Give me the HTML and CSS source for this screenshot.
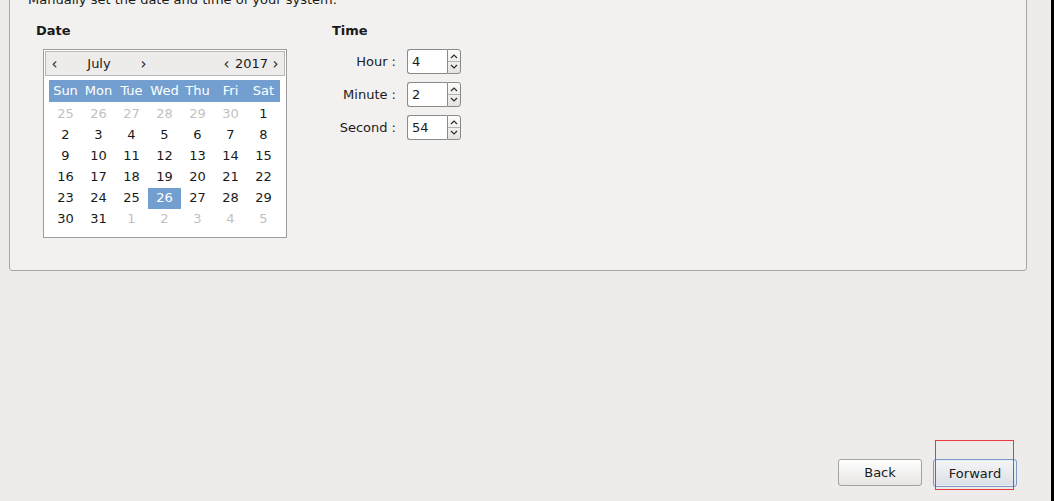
FILE: index.html
```html
<!DOCTYPE html>
<html lang="en">
<head>
    <meta charset="UTF-8">
    <title>Date and Time</title>
    <link rel="stylesheet" href="styles.css">
</head>
<body>
    <div class="screen">
        <div class="main">
            <div class="panel">
                <p class="intro">Manually set the date and time of your system.</p>
                <div class="columns">
                    <div class="date-col">
                        <h2>Date</h2>
                        <div class="calendar">
                            <div class="cal-head">
                                <span class="arrow">&#8249;</span>
                                <span class="month">July</span>
                                <span class="arrow">&#8250;</span>
                                <span class="spacer"></span>
                                <span class="arrow">&#8249;</span>
                                <span class="year">2017</span>
                                <span class="arrow">&#8250;</span>
                            </div>
                            <div class="days">
                                <div class="dayname">Sun</div>
                                <div class="dayname">Mon</div>
                                <div class="dayname">Tue</div>
                                <div class="dayname">Wed</div>
                                <div class="dayname">Thu</div>
                                <div class="dayname">Fri</div>
                                <div class="dayname">Sat</div>

                                <div class="day other">25</div>
                                <div class="day other">26</div>
                                <div class="day other">27</div>
                                <div class="day other">28</div>
                                <div class="day other">29</div>
                                <div class="day other">30</div>
                                <div class="day">1</div>

                                <div class="day">2</div>
                                <div class="day">3</div>
                                <div class="day">4</div>
                                <div class="day">5</div>
                                <div class="day">6</div>
                                <div class="day">7</div>
                                <div class="day">8</div>

                                <div class="day">9</div>
                                <div class="day">10</div>
                                <div class="day">11</div>
                                <div class="day">12</div>
                                <div class="day">13</div>
                                <div class="day">14</div>
                                <div class="day">15</div>

                                <div class="day">16</div>
                                <div class="day">17</div>
                                <div class="day">18</div>
                                <div class="day">19</div>
                                <div class="day">20</div>
                                <div class="day">21</div>
                                <div class="day">22</div>

                                <div class="day">23</div>
                                <div class="day">24</div>
                                <div class="day">25</div>
                                <div class="day selected">26</div>
                                <div class="day">27</div>
                                <div class="day">28</div>
                                <div class="day">29</div>

                                <div class="day">30</div>
                                <div class="day">31</div>
                                <div class="day other">1</div>
                                <div class="day other">2</div>
                                <div class="day other">3</div>
                                <div class="day other">4</div>
                                <div class="day other">5</div>
                            </div>
                        </div>
                    </div>
                    <div class="time-col">
                        <h2>Time</h2>
                        <div class="time-grid">
                            <label>Hour :</label>
                            <div class="spin"><span class="spin-value">4</span><span class="spin-btn"><svg width="12" height="23" viewBox="0 0 12 23"><path d="M3 8 L6 5 L9 8" fill="none" stroke="#2e2e2e" stroke-width="1.2"/><line x1="0" y1="11.5" x2="12" y2="11.5" stroke="#b5b3af"/><path d="M3 15 L6 18 L9 15" fill="none" stroke="#2e2e2e" stroke-width="1.2"/></svg></span></div>
                            <label>Minute :</label>
                            <div class="spin"><span class="spin-value">2</span><span class="spin-btn"><svg width="12" height="23" viewBox="0 0 12 23"><path d="M3 8 L6 5 L9 8" fill="none" stroke="#2e2e2e" stroke-width="1.2"/><line x1="0" y1="11.5" x2="12" y2="11.5" stroke="#b5b3af"/><path d="M3 15 L6 18 L9 15" fill="none" stroke="#2e2e2e" stroke-width="1.2"/></svg></span></div>
                            <label>Second :</label>
                            <div class="spin"><span class="spin-value">54</span><span class="spin-btn"><svg width="12" height="23" viewBox="0 0 12 23"><path d="M3 8 L6 5 L9 8" fill="none" stroke="#2e2e2e" stroke-width="1.2"/><line x1="0" y1="11.5" x2="12" y2="11.5" stroke="#b5b3af"/><path d="M3 15 L6 18 L9 15" fill="none" stroke="#2e2e2e" stroke-width="1.2"/></svg></span></div>
                        </div>
                    </div>
                </div>
            </div>
            <div class="buttons">
                <button class="btn">Back</button>
                <button class="btn btn-default">Forward<span class="focus-box"></span></button>
            </div>
        </div>
        <div class="edge"></div>
    </div>
</body>
</html>
```

FILE: styles.css
```css
body {
    margin: 0;
    font-family: "DejaVu Sans", sans-serif;
    font-size: 13px;
    color: #1a1a1a;
    background-color: #edeceb;
    overflow: hidden;
}
.screen {
    display: flex;
    height: 501px;
}
.main {
    flex: 1;
    display: flex;
    flex-direction: column;
}
.edge {
    width: 3px;
    background: #000;
}
.panel {
    margin: -30px 0 0 9px;
    width: 1018px;
    height: 301px;
    box-sizing: border-box;
    border: 1px solid #a9a7a3;
    border-radius: 3px;
    background: #f2f1f0;
    padding: 21px 0 0 18px;
}
.intro {
    margin: 0;
    line-height: 16px;
}
.columns {
    display: flex;
    margin-top: 15px;
    padding-left: 8px;
}
h2 {
    margin: 0 0 10px 0;
    font-size: 13px;
    line-height: 16px;
    font-weight: bold;
}
.date-col {
    width: 296px;
}
.calendar {
    margin-left: 7px;
    width: 244px;
    box-sizing: border-box;
    border: 1px solid #9e9c98;
    padding: 1px;
    background: #fff;
}
.cal-head {
    display: flex;
    align-items: center;
    height: 25px;
    box-sizing: border-box;
    border: 1px solid #b9b7b3;
    background: #edeceb;
    padding: 0 4px 0 4px;
}
.arrow {
    font-size: 15px;
    width: 9px;
    text-align: center;
}
.month {
    width: 80px;
    text-align: center;
}
.year {
    margin: 0 3px 0 4px;
}
.spacer {
    flex: 1;
}
.days {
    display: grid;
    grid-template-columns: repeat(7, 33px);
    grid-template-rows: 24px repeat(6, 21px);
    margin: 4px 4px 6px 4px;
}
.dayname {
    align-self: start;
    height: 22px;
    background: #729fcf;
    color: #fff;
    line-height: 21px;
    text-align: center;
}
.day {
    text-align: center;
    line-height: 20px;
}
.day.other {
    color: #c3c1be;
}
.day.selected {
    background: #729fcf;
    color: #fff;
}
.time-grid {
    display: grid;
    grid-template-columns: 64px auto;
    column-gap: 11px;
    row-gap: 8px;
    align-items: center;
    margin-top: 1px;
}
.time-grid label {
    text-align: right;
}
.spin {
    display: flex;
    width: 54px;
    height: 25px;
}
.spin-value {
    width: 40px;
    box-sizing: border-box;
    border: 1px solid #8b8a88;
    border-right: none;
    border-radius: 3px 0 0 3px;
    background: #fff;
    padding-left: 4px;
    line-height: 23px;
}
.spin-btn {
    width: 14px;
    box-sizing: border-box;
    border: 1px solid #8b8a88;
    border-radius: 0 3px 3px 0;
    background: linear-gradient(#fbfbfa, #e4e3e0);
    display: flex;
}
.buttons {
    margin-top: auto;
    display: flex;
    justify-content: flex-end;
    align-items: flex-start;
    gap: 11px;
    padding: 0 34px 14px 0;
}
.btn {
    position: relative;
    width: 84px;
    height: 27px;
    font-family: "DejaVu Sans", sans-serif;
    font-size: 13px;
    color: #1a1a1a;
    border: 1px solid #a3a19d;
    border-radius: 3px;
    background: linear-gradient(#ffffff, #e6e5e3);
    padding: 0;
}
.btn-default {
    height: 28px;
    border-color: #7b98c6;
    background: linear-gradient(#f4f5f7, #dcdfe6);
    box-shadow: inset 0 0 0 1px #e9ecf2;
}
.focus-box {
    position: absolute;
    left: 1px;
    top: -20px;
    width: 77px;
    height: 48px;
    border: 1px solid #e8393c;
}
```
